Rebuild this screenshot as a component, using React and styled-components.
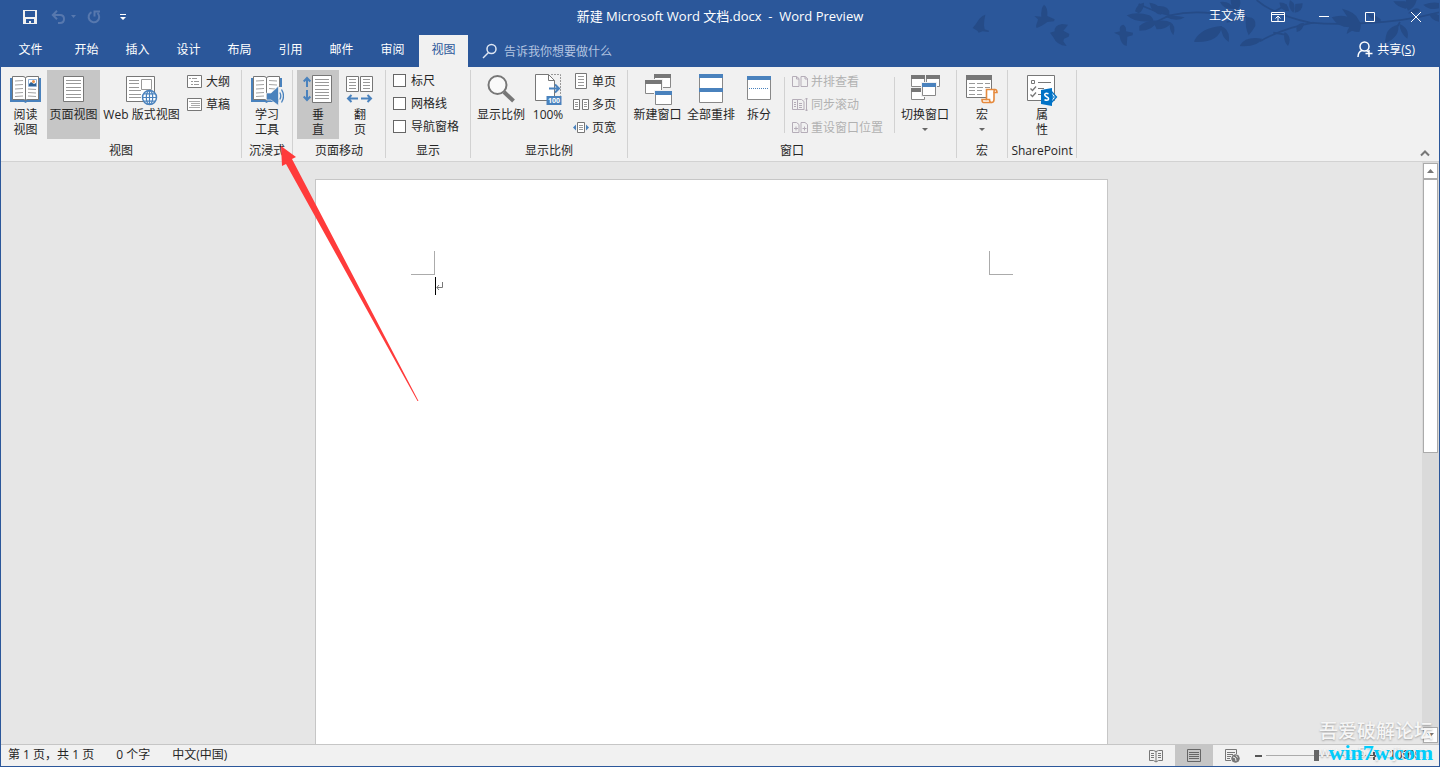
import React, { useState } from "react";
import styled, { createGlobalStyle } from "styled-components";

const BLUE = "#2b579a";
const ACCENT = "#4a82bd";
const GREY = "#777777";

const TABS = ["开始", "插入", "设计", "布局", "引用", "邮件", "审阅", "视图"];

/* ---------- large ribbon icons ---------- */

const BookShape = () => (
  <>
    <path d="M0 6h31v24H17l-1.500 1L14 30H0z" fill={ACCENT} />
    <path
      d="M2.500 4.500H13q2.500 0 2.500 2v22q-.5-1-2.500-1H2.500zM28.500 4.500H18q-2.500 0-2.500 2v22q.5-1 2.500-1h10.500z"
      fill="#fff"
      stroke={GREY}
    />
    <path
      d="M5 9l8-.5M5 13l8-.5M5 17l8-.5M5 21l8-.5M5 24.500l8-.5"
      stroke="#a3a3a3"
    />
  </>
);

const ReadIcon = () => (
  <svg width="32" height="34" viewBox="0 0 32 34" fill="none">
    <BookShape />
    <path d="M18 17l8 .5M18 20.500l8 .5M18 24l8 .5" stroke="#a3a3a3" />
    <path d="M18.500 7.500h8v7h-8z" fill="#fff" stroke="#8fb0d6" />
    <path d="M19 14v-2l2-2 3 2 2-1v3z" fill="#2f6193" />
    <circle cx="23.500" cy="9.500" r="1.500" fill="#e8914a" />
  </svg>
);

const StudyIcon = () => (
  <svg width="33" height="34" viewBox="0 0 33 34" fill="none">
    <BookShape />
    <path d="M18 8.500l8 .5M18 12.500l8 .5M18 16.500l6 .5" stroke="#a3a3a3" />
    <path d="M28 15h5v19h-5z" fill="#f1f1f1" />
    <path d="M15.500 21H20l7.500-7v19.500L20 28h-4.500z" fill={ACCENT} stroke="#f1f1f1" strokeWidth=".7" />
    <path d="M28.800 20.500q2 3.500 0 7M30.500 17.500q4 6.500 0 13" stroke={ACCENT} strokeWidth="1.300" />
  </svg>
);

const PageViewIcon = () => (
  <svg width="22" height="34" viewBox="0 0 22 34" fill="none">
    <path d="M.5 4.500h20v25H.5z" fill="#fff" stroke={GREY} />
    <path
      d="M3 8.500h15M3 11.500h15M3 15.500h15M3 18.500h15M3 22.500h15M3 25.500h15"
      stroke="#999"
    />
  </svg>
);

const Globe = () => (
  <>
    <circle cx="23.500" cy="25.500" r="7" fill="#fff" stroke={ACCENT} strokeWidth="1.500" />
    <ellipse cx="23.500" cy="25.500" rx="3.200" ry="7" stroke={ACCENT} strokeWidth="1.200" />
    <path d="M23.500 18.500v14M16.500 25.500h14M18 21.800h11M18 29.200h11" stroke={ACCENT} strokeWidth="1.200" />
  </>
);

const WebIcon = () => (
  <svg width="32" height="34" viewBox="0 0 32 34" fill="none">
    <path d="M.5 4.500h28v25H.5z" fill="#fff" stroke={GREY} />
    <path
      d="M3 8.500h10M3 11.500h10M3 15.500h10M3 18.500h12M3 22.500h12M3 25.500h12M15.500 7.500h10v10h-10z"
      stroke="#999"
    />
    <Globe />
  </svg>
);

const VerticalIcon = () => (
  <svg width="30" height="34" viewBox="0 0 30 34" fill="none">
    <path d="M9.500 3.500h19v27h-19z" fill="#fff" stroke={GREY} />
    <path
      d="M12 7.500h14M12 10.500h14M12 13.500h14M12 17.500h14M12 20.500h14M12 23.500h14M12 26.500h14"
      stroke="#999"
    />
    <path d="M4 15V6.500M.7 9.500L4 6l3.300 3.500M4 18v9.500M.7 24.500L4 28l3.300-3.500" stroke={ACCENT} strokeWidth="2" />
  </svg>
);

const SideIcon = () => (
  <svg width="28" height="34" viewBox="0 0 28 34" fill="none">
    <path d="M.5 4.500h12v15H.5zM14.500 4.500h12v15h-12z" fill="#fff" stroke={GREY} />
    <path
      d="M3 7.500h7M3 10.500h7M3 13.500h7M3 16.500h7M17 7.500h7M17 10.500h7M17 13.500h7M17 16.500h7"
      stroke="#999"
    />
    <path d="M12 26.500H3M5.500 23L2 26.500 5.500 30M15 26.500h9M21.500 23l3.500 3.500-3.500 3.500" stroke={ACCENT} strokeWidth="2" />
  </svg>
);

const ZoomIcon = () => (
  <svg width="28" height="34" viewBox="0 0 28 34" fill="none">
    <circle cx="10.500" cy="13" r="9" fill="#fafafa" stroke={GREY} strokeWidth="2" />
    <path d="M17 20l9.500 9" stroke={GREY} strokeWidth="4" />
  </svg>
);

const HundredIcon = () => (
  <svg width="28" height="34" viewBox="0 0 28 34" fill="none">
    <path d="M1.500 2.500h13l6 6v20h-19z" fill="#fff" stroke={GREY} />
    <path d="M14.500 2.500v6h6" stroke={GREY} />
    <path d="M17 2.500h9.500v21" stroke="#999" strokeDasharray="2 1" />
    <path d="M15 16.500h10M21 12.500l4 4-4 4" stroke={ACCENT} strokeWidth="2" />
    <path d="M12.500 24h15v9h-15z" fill={ACCENT} />
    <text x="20" y="31" textAnchor="middle" fontFamily="Open Sans, sans-serif" fontSize="7" fontWeight="700" fill="#fff">
      100
    </text>
  </svg>
);

const Win = ({ x, y, w, h, bar = GREY, edge = "#888" }) => (
  <>
    <path d={`M${x + 0.5} ${y + 0.5}h${w - 1}v${h - 1}h${1 - w}z`} fill="#fff" stroke={edge} />
    <path d={`M${x} ${y}h${w}v4h-${w}z`} fill={bar} />
  </>
);

const NewWindowIcon = () => (
  <svg width="28" height="34" viewBox="0 0 28 34">
    <Win x={10} y={2} w={17} h={14} />
    <path d="M0 7h19v16H0z" fill="#f1f1f1" />
    <Win x={1} y={8} w={17} h={14} />
    <path d="M10 18h18v16H10z" fill="#f1f1f1" />
    <Win x={11} y={19} w={17} h={14} bar={ACCENT} />
  </svg>
);

const ArrangeIcon = () => (
  <svg width="24" height="34" viewBox="0 0 24 34">
    <Win x={0} y={2} w={24} h={15} bar={ACCENT} />
    <Win x={0} y={16} w={24} h={15} bar={ACCENT} />
  </svg>
);

const SplitIcon = () => (
  <svg width="24" height="34" viewBox="0 0 24 34">
    <Win x={0} y={4} w={24} h={24} bar={ACCENT} />
    <path d="M2 16.500h20" stroke={ACCENT} strokeDasharray="1 1" />
  </svg>
);

const SwitchIcon = () => (
  <svg width="29" height="34" viewBox="0 0 29 34">
    <Win x={0} y={3} w={14} h={12} />
    <Win x={15} y={3} w={14} h={12} />
    <Win x={0} y={16} w={14} h={12} />
    <path d="M10 10h16v15H10z" fill="#f1f1f1" />
    <Win x={11} y={11} w={14} h={13} bar={ACCENT} />
  </svg>
);

const MacroIcon = () => (
  <svg width="32" height="34" viewBox="0 0 32 34" fill="none">
    <path d="M.5 3.500h25v22H.5z" fill="#fff" stroke={GREY} />
    <path d="M0 3h26v5H0z" fill={GREY} />
    <path d="M3 11.500h6M11 11.500h6M19 11.500h5M3 15.500h6M11 15.500h6M19 15.500h5M3 18.500h6M11 18.500h5M3 22.500h6M11 22.500h5" stroke="#999" />
    <path d="M20.500 17.500h8.500q2 0 2 3h-3v7q0 3-2.500 3h-8q-1.500 0-1.500-3h4.500z" fill="#fff" stroke="#e58a3e" strokeWidth="1.600" />
    <path d="M28 20.500q-.3-2.500 1-3M19.500 27.500h4q0 3 2 3" stroke="#e58a3e" strokeWidth="1.600" />
  </svg>
);

const PropertiesIcon = () => (
  <svg width="30" height="34" viewBox="0 0 30 34" fill="none" overflow="visible">
    <path d="M.5 3.500h27v25H.5z" fill="#fff" stroke={GREY} />
    <path d="M4.500 8.500h3v3h-3zM11 10.500h13M11 16.500h6M11 22.500h4" stroke={GREY} />
    <path d="M3.500 16.500l2 2 3.500-4M3.500 22.500l2 2 3.500-4" stroke={GREY} strokeWidth="1.300" />
    <path d="M20 19l4 0 5.500 6-5.500 6h-4" stroke="#0072c6" strokeWidth="1.300" fill="#fff" />
    <path d="M24 20l2 5-2 5M24 25h5" stroke="#0072c6" />
    <path d="M14 18l11-2v18l-11-2z" fill="#0072c6" />
    <path d="M21.500 21.800q-3.800-1.300-3.800 1 0 1 1.900 1.900 2 .9 2 2 0 2.300-4.100 1" stroke="#fff" strokeWidth="1.500" />
  </svg>
);

/* ---------- small ribbon icons ---------- */

const SmallSvg = ({ children }) => (
  <svg width="16" height="17" viewBox="0 0 16 17" fill="none">
    {children}
  </svg>
);

const OutlineIcon = () => (
  <SmallSvg>
    <path d="M.5 2.500h14v12H.5z" fill="#fff" stroke={GREY} />
    <path d="M2 5.500h2M5 5.500h5M4 8.500h2M7 8.500h5M4 11.500h2M7 11.500h5" stroke="#999" />
  </SmallSvg>
);

const DraftIcon = () => (
  <SmallSvg>
    <path d="M.5 2.500h14v12H.5z" fill="#fff" stroke={GREY} />
    <path d="M2 5.500h11M4 7.500h9M4 9.500h9M2 11.500h11" stroke="#aaa" />
  </SmallSvg>
);

const OnePageIcon = () => (
  <SmallSvg>
    <path d="M2.500.5h11v15h-11z" fill="#fff" stroke={GREY} />
    <path d="M5 3.500h6M5 6.500h6M5 9.500h6M5 12.500h6" stroke="#999" />
  </SmallSvg>
);

const MultiPageIcon = () => (
  <SmallSvg>
    <path d="M.5 3.500h6v10h-6zM9.500 3.500h6v10h-6z" fill="#fff" stroke={GREY} />
    <path d="M2 6.500h3M2 8.500h3M2 10.500h3M11 6.500h3M11 8.500h3M11 10.500h3" stroke="#999" />
  </SmallSvg>
);

const PageWidthIcon = () => (
  <SmallSvg>
    <path d="M4.500 3.500h7v10h-7z" fill="#fff" stroke={GREY} />
    <path d="M6 6.500h4M6 8.500h4M6 10.500h4" stroke="#999" />
    <path d="M3 5.500v6l-3-3zM13 5.500v6l3-3z" fill={ACCENT} />
  </SmallSvg>
);

const PAGE_PAIR = "M.5 3.500h4l2.500 2v8H.5zM9 3.500h4l2.500 2v8H9z";

const CompareIcon = () => (
  <SmallSvg>
    <path d={PAGE_PAIR} stroke="#b5adb8" />
    <path d="M4.500 3.500v2.500H7M13 3.500v2.500h2.500" stroke="#b5adb8" />
  </SmallSvg>
);

const SyncIcon = () => (
  <SmallSvg>
    <path d="M.5 3.500h5v10h-5zM5.500 3.500h4l2.500 2v8H5.500z" stroke="#b5adb8" />
    <path d="M2 6.500h2M2 8.500h2M2 10.500h2M7 7.500h3M7 9.500h3M7 11.500h3M14.500 2v13M13 3.500L14.500 2 16 3.500M13 13.500l1.500 1.500 1.500-1.500" stroke="#b5adb8" />
  </SmallSvg>
);

const ResetIcon = () => (
  <SmallSvg>
    <path d={PAGE_PAIR} stroke="#b5adb8" />
    <path d="M2 9.500h4M4 7.500v4M10.500 9.500h4M12.500 7.500v4" stroke="#b5adb8" />
  </SmallSvg>
);

/* ---------- header art ---------- */

const HeaderArt = () => (
  <Art width="480" height="67" viewBox="57 0 1440 201" fill="#254b87" aria-hidden="true">
    {/* birds */}
    <path d="M98 84Q108 72 118 56 128 46 136 44 132 60 132 76L134 88 147 92 146 96 128 94 116 98 112 92z" />
    <path d="M283 48L304 50Q302 24 312 14 324 22 322 48L344 58 342 64 322 66Q304 80 290 84 286 78 292 66L294 58z" />
    <path d="M330 98L344 94Q342 76 366 72L384 74Q376 86 370 92L388 102 386 110 372 116 370 124 380 138Q350 136 340 112z" />
    <path d="M522 98L540 94Q536 76 550 74 560 80 558 94L579 98 578 106 562 110 560 138Q544 138 538 106z" />
    {/* branches */}
    <g fill="none" stroke="#254b87" strokeWidth="5">
      <path d="M596 12Q640 34 690 46 750 32 820 40L900 32M690 46Q660 60 640 70M950 0Q1000 44 1110 68 1180 74 1260 70 1390 66 1500 36" />
      <path d="M1120 68Q1030 84 960 124M1000 98L1036 104M1000 36L1040 14M1380 66L1366 90M860 66L920 50" />
    </g>
    {/* leaves */}
    <path d="M560 46Q590 34 628 46 640 54 640 62 590 72 560 46zM585 34Q590 12 612 8 612 30 596 40zM628 8Q664 12 664 44 636 40 628 8zM652 18Q690 16 688 42 664 46 652 18z" />
    <path d="M598 78Q620 60 652 62 640 92 598 92zM640 66Q672 56 694 68 680 88 650 88zM690 66Q710 76 700 106 686 90 690 66zM676 50Q700 44 734 52 710 68 676 50z" />
    <path d="M840 6Q870 2 880 26 852 30 840 6zM872 0H900Q906 22 886 34 872 20 872 0zM918 52Q950 48 946 78 938 92 926 106 914 82 918 52z" />
    <path d="M763 122Q784 82 846 78 838 130 763 126zM842 78Q872 88 866 126 844 112 842 78zM900 136Q916 108 966 116 952 142 900 138zM1034 96Q1058 110 1044 138 1028 122 1034 96z" />
    <path d="M1018 8Q1044 6 1048 34 1022 34 1018 8zM1050 0Q1072 14 1060 38 1042 24 1050 0zM1066 12L1088 10Q1088 36 1064 38zM1070 92Q1066 70 1092 68 1090 92 1070 96z" />
    <path d="M1175 52Q1200 44 1222 50L1206 26Q1248 36 1256 60 1268 74 1258 96 1244 96 1236 92L1220 102Q1222 88 1228 82 1194 82 1175 52z" />
    <path d="M1336 130Q1334 82 1374 74 1382 108 1336 130zM1378 72Q1410 84 1402 116 1380 100 1378 72zM1322 58Q1300 40 1280 38 1296 66 1322 64z" />
    <path d="M1360 4H1396Q1410 24 1396 26 1372 22 1360 4zM1398 0H1430Q1424 24 1404 32 1396 18 1398 0zM1404 40Q1430 16 1440 30 1432 44 1404 40zM1450 14Q1480 4 1500 10V24Q1470 34 1450 14zM1468 42Q1490 38 1500 48V66Q1474 62 1468 42z" />
  </Art>
);

/* ---------- ribbon building blocks ---------- */

const Big = ({ icon, lines, width, active, menu }) => (
  <BigButton type="button" $width={width} $active={active}>
    {icon}
    {lines.map((line) => (
      <span key={line}>{line}</span>
    ))}
    {menu && <Caret />}
  </BigButton>
);

const Small = ({ icon, children, disabled }) => (
  <SmallButton type="button" disabled={disabled}>
    {icon}
    {children}
  </SmallButton>
);

const Check = ({ id, children }) => (
  <CheckRow htmlFor={id}>
    <input id={id} type="checkbox" />
    {children}
  </CheckRow>
);

const RibbonGroup = ({ label, pad, children }) => (
  <Group>
    <GroupBody $pad={pad}>{children}</GroupBody>
    <GroupLabel>{label}</GroupLabel>
  </Group>
);

const Ribbon = () => (
  <RibbonBar>
    <RibbonGroup label="视图" pad="0 11px 0 3px">
      <Big icon={<ReadIcon />} lines={["阅读", "视图"]} width={43} />
      <Big icon={<PageViewIcon />} lines={["页面视图"]} width={53} active />
      <Big icon={<WebIcon />} lines={["Web 版式视图"]} width={83} />
      <Stack>
        <Small icon={<OutlineIcon />}>大纲</Small>
        <Small icon={<DraftIcon />}>草稿</Small>
      </Stack>
    </RibbonGroup>
    <RibbonGroup label="沉浸式" pad="0 3px">
      <Big icon={<StudyIcon />} lines={["学习", "工具"]} width={44} />
    </RibbonGroup>
    <RibbonGroup label="页面移动" pad="0 4px">
      <Big icon={<VerticalIcon />} lines={["垂", "直"]} width={42} active />
      <Big icon={<SideIcon />} lines={["翻", "页"]} width={42} />
    </RibbonGroup>
    <RibbonGroup label="显示" pad="0 11px 0 3px">
      <Stack>
        <Check id="ruler">标尺</Check>
        <Check id="gridlines">网格线</Check>
        <Check id="navigation">导航窗格</Check>
      </Stack>
    </RibbonGroup>
    <RibbonGroup label="显示比例" pad="0 11px 0 4px">
      <Big icon={<ZoomIcon />} lines={["显示比例"]} width={52} />
      <Big icon={<HundredIcon />} lines={["100%"]} width={42} />
      <Stack>
        <Small icon={<OnePageIcon />}>单页</Small>
        <Small icon={<MultiPageIcon />}>多页</Small>
        <Small icon={<PageWidthIcon />}>页宽</Small>
      </Stack>
    </RibbonGroup>
    <RibbonGroup label="窗口" pad="0 4px 0 3px">
      <Big icon={<NewWindowIcon />} lines={["新建窗口"]} width={53} />
      <Big icon={<ArrangeIcon />} lines={["全部重排"]} width={54} />
      <Big icon={<SplitIcon />} lines={["拆分"]} width={42} />
      <InnerRule />
      <Stack>
        <Small icon={<CompareIcon />} disabled>并排查看</Small>
        <Small icon={<SyncIcon />} disabled>同步滚动</Small>
        <Small icon={<ResetIcon />} disabled>重设窗口位置</Small>
      </Stack>
      <InnerRule $after />
      <Big icon={<SwitchIcon />} lines={["切换窗口"]} width={54} menu />
    </RibbonGroup>
    <RibbonGroup label="宏" pad="0 3px">
      <Big icon={<MacroIcon />} lines={["宏"]} width={44} menu />
    </RibbonGroup>
    <RibbonGroup label="SharePoint" pad="0 2px">
      <Big icon={<PropertiesIcon />} lines={["属", "性"]} width={64} />
    </RibbonGroup>
    <Collapse type="button" aria-label="折叠功能区">
      <svg width="10" height="7" viewBox="0 0 10 7" fill="none">
        <path d="M1 5.500l4-4 4 4" stroke={GREY} strokeWidth="2" />
      </svg>
    </Collapse>
  </RibbonBar>
);

const App = () => {
  const [tab, setTab] = useState("视图");
  const [query, setQuery] = useState("");
  const [zoom, setZoom] = useState(50);

  return (
    <>
      <GlobalStyle />
      <Window>
        <Header>
          <HeaderArt />
          <TitleBar>
            <QuickAccess>
              <IconButton type="button" aria-label="保存" $width={36}>
                <svg width="14" height="14" viewBox="0 0 14 14">
                  <path d="M0 0h14v14H0z" fill="#f1f1f1" />
                  <path d="M2 1h10v6H2zM3 9h8v4H8v-2H6v2H3z" fill={BLUE} />
                </svg>
              </IconButton>
              <IconButton type="button" aria-label="撤消" $width={32} disabled>
                <svg width="27" height="14" viewBox="0 0 27 14" fill="none" stroke="#5778ae" strokeWidth="2">
                  <path d="M1.500 5H9q4 0 4 4t-4 4H7M6 .8L1.800 5 6 9.200" />
                  <path d="M20 5h5l-2.500 3z" fill="#5778ae" stroke="none" />
                </svg>
              </IconButton>
              <IconButton type="button" aria-label="恢复" $width={28} disabled>
                <svg width="14" height="14" viewBox="0 0 14 14" fill="none" stroke="#5778ae" strokeWidth="2">
                  <path d="M4.500 2.200A5.300 5.300 0 1 0 10.500 3M7.500 6.500V1.500H13" />
                </svg>
              </IconButton>
              <IconButton type="button" aria-label="自定义快速访问工具栏" $width={30}>
                <svg width="6" height="8" viewBox="0 0 6 8" fill="#fff">
                  <path d="M0 1h6v1H0zM0 4h6L3 7z" />
                </svg>
              </IconButton>
            </QuickAccess>
            <Title>新建 Microsoft Word 文档.docx&nbsp; -&nbsp; Word Preview</Title>
            <WindowControls>
              <UserName>王文涛</UserName>
              <IconButton type="button" aria-label="功能区显示选项" $width={46}>
                <svg width="14" height="12" viewBox="0 0 14 12" fill="none" stroke="#fff">
                  <path d="M.5 1.500h13v9H.5zM.5 3.500h13M7 10V5.500M4.500 7.500L7 5l2.500 2.500" />
                </svg>
              </IconButton>
              <IconButton type="button" aria-label="最小化" $width={46}>
                <svg width="10" height="10" viewBox="0 0 10 10">
                  <path d="M0 4h10v1H0z" fill="#fff" />
                </svg>
              </IconButton>
              <IconButton type="button" aria-label="最大化" $width={46}>
                <svg width="10" height="10" viewBox="0 0 10 10">
                  <path d="M.5.5h9v9h-9z" fill="none" stroke="#fff" />
                </svg>
              </IconButton>
              <IconButton type="button" aria-label="关闭" $width={46}>
                <svg width="10" height="10" viewBox="0 0 10 10">
                  <path d="M0 0l10 10M10 0L0 10" stroke="#fff" />
                </svg>
              </IconButton>
            </WindowControls>
          </TitleBar>
          <TabRow>
            <FileTab type="button">文件</FileTab>
            {TABS.map((name) => (
              <Tab key={name} type="button" $active={name === tab} onClick={() => setTab(name)}>
                {name}
              </Tab>
            ))}
            <TellMe htmlFor="tell-me">
              <svg width="16" height="16" viewBox="0 0 16 16" fill="none" stroke="#dfe7f3">
                <circle cx="9.500" cy="6" r="4.500" strokeWidth="1.500" />
                <path d="M6.500 9.500L1 15" strokeWidth="1.500" />
              </svg>
              <input
                id="tell-me"
                value={query}
                placeholder="告诉我你想要做什么"
                aria-label="告诉我你想要做什么"
                onChange={(event) => setQuery(event.target.value)}
              />
            </TellMe>
            <Share type="button">
              <svg width="16" height="17" viewBox="0 0 16 17" fill="none" stroke="#fff" strokeWidth="1.500">
                <circle cx="7.500" cy="5.500" r="4.500" />
                <path d="M1 16q0-5 4-6.500M9.500 9.500l2 1.500M12 9v7M8.500 12.500h7" />
              </svg>
              <span>
                共享(<u>S</u>)
              </span>
            </Share>
          </TabRow>
        </Header>
        <Ribbon />
        <Workspace>
          <Canvas>
            <Page>
              <Margins>
                <Corner />
                <Corner $right />
              </Margins>
              <TextLine>
                <TextCursor />
                <svg width="7" height="9" viewBox="0 0 7 9" fill="none" stroke={GREY}>
                  <path d="M6.500 0v5.500H1M3 3L.8 5.500 3 8" />
                </svg>
              </TextLine>
            </Page>
          </Canvas>
          <ScrollBar>
            <ScrollButton type="button" aria-label="向上滚动">
              <svg width="7" height="4" viewBox="0 0 7 4">
                <path d="M0 4l3.500-4L7 4z" fill={GREY} />
              </svg>
            </ScrollButton>
            <ScrollTrack>
              <ScrollThumb />
            </ScrollTrack>
            <ScrollButton type="button" aria-label="向下滚动">
              <svg width="7" height="4" viewBox="0 0 7 4">
                <path d="M0 0h7L3.500 4z" fill={GREY} />
              </svg>
            </ScrollButton>
          </ScrollBar>
        </Workspace>
        <StatusBar>
          <StatusText>第 1 页，共 1 页</StatusText>
          <StatusText>0 个字</StatusText>
          <StatusText>中文(中国)</StatusText>
          <StatusTools>
            <ViewButton type="button" aria-label="阅读视图">
              <svg width="14" height="14" viewBox="0 0 14 14" fill="none" stroke={GREY}>
                <path d="M.5 1.500h4l2.500 1 2.500-1h4v10h-4l-2.500 1.500-2.500-1.500h-4zM7 2v11" />
                <path d="M2 4.500h3M2 6.500h3M2 8.500h3M9 4.500h3M9 6.500h3M9 8.500h3" />
              </svg>
            </ViewButton>
            <ViewButton type="button" aria-label="页面视图" $active>
              <svg width="14" height="14" viewBox="0 0 14 14" fill="none" stroke="#666">
                <path d="M.5.5h13v12H.5zM2 3.500h10M2 5.500h10M2 7.500h10M2 9.500h10" />
              </svg>
            </ViewButton>
            <ViewButton type="button" aria-label="Web 版式视图">
              <svg width="15" height="14" viewBox="0 0 15 14" fill="none" stroke={GREY}>
                <path d="M11.500 5V.5H.5v11H6M2 3.500h8M2 5.500h6M2 7.500h4M2 9.500h3" />
                <circle cx="10.500" cy="9.500" r="3.800" fill={GREY} />
                <path d="M8 8l2.500 1 .5 3M11 6.500l1.500 2" stroke="#f1f1f1" />
              </svg>
            </ViewButton>
            <ZoomButton type="button" aria-label="缩小">
              <svg width="7" height="8" viewBox="0 0 7 8">
                <path d="M0 3h7v2H0z" fill="#555" />
              </svg>
            </ZoomButton>
            <ZoomSlider
              type="range"
              aria-label="显示比例"
              value={zoom}
              onChange={(event) => setZoom(Number(event.target.value))}
            />
            <ZoomButton type="button" aria-label="放大">
              <svg width="8" height="8" viewBox="0 0 8 8">
                <path d="M0 3h3V0h2v3h3v2H5v3H3V5H0z" fill="#555" />
              </svg>
            </ZoomButton>
            <ZoomValue>100%</ZoomValue>
          </StatusTools>
        </StatusBar>
        <Pointer width="140" height="258" viewBox="0 0 140 258" aria-hidden="true">
          <path d="M0 0l15 11-4 2 126.500 242h-1L5 18l-4 2z" fill="#ff3b3b" />
        </Pointer>
        <ForumMark>
          吾爱破解论坛
          <small>www.52pojie.cn</small>
        </ForumMark>
        <SiteMark>win7w.com</SiteMark>
      </Window>
    </>
  );
};

export default App;

const GlobalStyle = createGlobalStyle`
  body {
    margin: 0;
    overflow: hidden;
  }
  *, *::before, *::after {
    box-sizing: border-box;
  }
  body, button, input {
    font-family: "Open Sans", "Noto Sans CJK SC", sans-serif;
    font-size: 12px;
    line-height: 15px;
    color: #262626;
  }
  button {
    margin: 0;
    padding: 0;
    border: 0;
    background: none;
  }
  svg {
    display: block;
    flex: none;
  }
`;

const Window = styled.div`
  position: relative;
  display: flex;
  flex-direction: column;
  height: 100vh;
  border: solid ${BLUE};
  border-width: 0 1px 1px;
  overflow: hidden;
`;

const Header = styled.header`
  position: relative;
  background: ${BLUE};
  color: #fff;
`;

const Art = styled.svg`
  position: absolute;
  top: 0;
  right: 0;
`;

const TitleBar = styled.div`
  position: relative;
  display: grid;
  grid-template-columns: 1fr auto 1fr;
  height: 35px;
`;

const QuickAccess = styled.div`
  display: flex;
  align-items: stretch;
  padding-left: 11px;
`;

const IconButton = styled.button`
  display: flex;
  align-items: center;
  justify-content: center;
  width: ${({ $width }) => $width}px;
  padding-bottom: 2px;
`;

const Title = styled.h1`
  margin: 0;
  font-size: 13px;
  font-weight: 400;
  line-height: 33px;
`;

const WindowControls = styled.div`
  display: flex;
  justify-content: flex-end;
`;

const UserName = styled.span`
  padding-right: 10px;
  line-height: 31px;
`;

const TabRow = styled.nav`
  position: relative;
  display: flex;
  gap: 2px;
  height: 32px;
`;

const Tab = styled.button`
  width: 49px;
  padding-bottom: 3px;
  color: ${({ $active }) => ($active ? BLUE : "#fff")};
  background: ${({ $active }) => ($active ? "#f1f1f1" : "transparent")};
`;

const FileTab = styled(Tab)`
  width: 59px;
`;

const TellMe = styled.label`
  display: flex;
  align-items: center;
  gap: 6px;
  flex: 1;
  padding-left: 12px;
  input {
    width: 200px;
    padding: 0;
    border: 0;
    outline: 0;
    background: none;
    color: #fff;
  }
  input::placeholder {
    color: #b3c4e0;
    opacity: 1;
  }
`;

const Share = styled.button`
  display: flex;
  align-items: center;
  gap: 4px;
  padding: 0 24px 4px 0;
  color: #fff;
`;

const RibbonBar = styled.section`
  display: flex;
  padding: 3px 0;
  background: #f1f1f1;
  border-bottom: 1px solid #d2d2d2;
`;

const Group = styled.div`
  border-right: 1px solid #d2d2d2;
`;

const GroupBody = styled.div`
  display: flex;
  height: 69px;
  padding: ${({ $pad }) => $pad};
`;

const GroupLabel = styled.div`
  margin-top: 5px;
  line-height: 14px;
  text-align: center;
  white-space: nowrap;
`;

const BigButton = styled.button`
  display: flex;
  flex-direction: column;
  align-items: center;
  width: ${({ $width }) => $width}px;
  padding-top: 2px;
  background: ${({ $active }) => ($active ? "#c6c6c6" : "transparent")};
  white-space: nowrap;
  svg {
    margin-bottom: 1px;
  }
`;

const Caret = styled.i`
  margin-top: 6px;
  border: solid transparent;
  border-width: 3px 3px 0;
  border-top-color: #666;
`;

const Stack = styled.div`
  display: flex;
  flex-direction: column;
  padding-left: 4px;
`;

const SmallButton = styled.button`
  display: flex;
  align-items: center;
  gap: 3px;
  height: 23px;
  &:disabled {
    color: #b1b1b1;
  }
`;

const CheckRow = styled.label`
  display: flex;
  align-items: center;
  gap: 5px;
  height: 23px;
  padding-bottom: 2px;
  input {
    appearance: none;
    width: 13px;
    height: 13px;
    margin: 0;
    background: #fff;
    border: 1px solid #666;
  }
`;

const InnerRule = styled.span`
  width: 1px;
  height: 56px;
  margin: ${({ $after }) => ($after ? "7px 3px 0 11px" : "7px 3px 0 4px")};
  background: #d2d2d2;
`;

const Collapse = styled.button`
  align-self: flex-end;
  margin-left: auto;
  padding: 0 9px 1px;
`;

const Workspace = styled.main`
  display: flex;
  flex: 1;
  min-height: 0;
  background: #e6e6e6;
`;

const Canvas = styled.div`
  display: flex;
  justify-content: center;
  flex: 1;
  padding-top: 17px;
  overflow: hidden;
`;

const Page = styled.article`
  width: 793px;
  height: 1122px;
  padding: 71px 94px 71px 95px;
  background: #fff;
  border: 1px solid #c6c6c6;
`;

const Margins = styled.div`
  display: flex;
  justify-content: space-between;
`;

const Corner = styled.span`
  width: 24px;
  height: 24px;
  border: solid #ababab;
  border-width: ${({ $right }) => ($right ? "0 0 1px 1px" : "0 1px 1px 0")};
`;

const TextLine = styled.div`
  display: flex;
  align-items: center;
  padding: 2px 0 0 24px;
`;

const TextCursor = styled.span`
  width: 1px;
  height: 18px;
  background: #000;
`;

const ScrollBar = styled.div`
  display: flex;
  flex-direction: column;
  width: 17px;
  padding: 1px;
  background: #dadada;
`;

const ScrollButton = styled.button`
  display: flex;
  align-items: center;
  justify-content: center;
  height: 16px;
  background: #fff;
  border: 1px solid #ababab;
`;

const ScrollTrack = styled.div`
  flex: 1;
`;

const ScrollThumb = styled.div`
  height: 50%;
  background: #fff;
  border: 1px solid #ababab;
`;

const StatusBar = styled.footer`
  display: flex;
  height: 22px;
  padding-left: 7px;
  background: #f1f1f1;
  border-top: 1px solid #c6c6c6;
`;

const StatusText = styled.span`
  margin-right: 22px;
  line-height: 20px;
`;

const StatusTools = styled.div`
  display: flex;
  margin-left: auto;
`;

const ViewButton = styled.button`
  display: flex;
  align-items: center;
  justify-content: center;
  width: 38px;
  background: ${({ $active }) => ($active ? "#c6c6c6" : "transparent")};
`;

const ZoomButton = styled.button`
  display: flex;
  align-items: center;
  justify-content: center;
  width: 15px;
`;

const ZoomSlider = styled.input`
  appearance: none;
  width: 100px;
  height: 21px;
  margin: 0;
  background: linear-gradient(#ababab, #ababab) center / 100% 1px no-repeat;
  &::-webkit-slider-thumb {
    appearance: none;
    width: 5px;
    height: 11px;
    background: #666;
  }
`;

const ZoomValue = styled.span`
  width: 58px;
  padding-left: 8px;
  line-height: 20px;
`;

const Pointer = styled.svg`
  position: absolute;
  top: 146px;
  left: 280px;
`;

const ForumMark = styled.div`
  position: absolute;
  right: 6px;
  bottom: 6px;
  display: flex;
  flex-direction: column;
  font-size: 19px;
  font-weight: 500;
  line-height: 22px;
  color: #f6f6f6;
  text-shadow: 0 1px 2px rgba(0, 0, 0, 0.3);
  small {
    font-size: 15px;
    line-height: 18px;
  }
`;

const SiteMark = styled.div`
  position: absolute;
  right: 6px;
  bottom: 0;
  font-family: "Liberation Serif", serif;
  font-size: 22px;
  font-weight: 700;
  line-height: 26px;
  color: #00cdfc;
`;
